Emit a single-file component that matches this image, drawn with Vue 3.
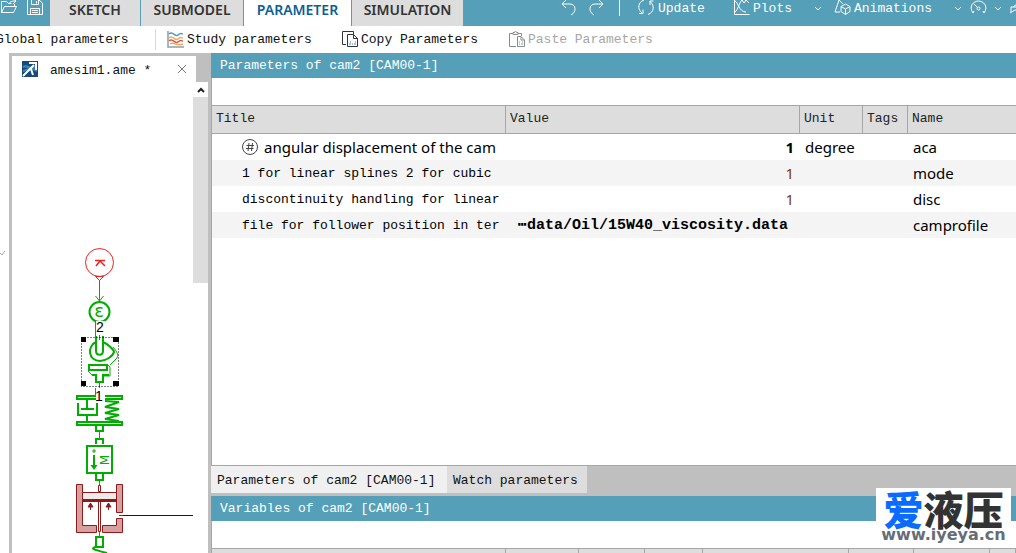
<script setup>
import { ref } from 'vue'

const modes = ['SKETCH', 'SUBMODEL', 'PARAMETER', 'SIMULATION']
const activeMode = ref('PARAMETER')

const rows = [
  { title: 'angular displacement of the cam', value: '1', unit: 'degree', name: 'aca', kind: 'state' },
  { title: '1 for linear splines 2 for cubic', value: '1', unit: '', name: 'mode', kind: 'int' },
  { title: 'discontinuity handling for linear', value: '1', unit: '', name: 'disc', kind: 'int' },
  { title: 'file for follower position in ter', value: '⋯data/Oil/15W40_viscosity.data', unit: '', name: 'camprofile', kind: 'file' },
]
</script>

<template>
  <div class="app">
    <header class="topbar">
      <div class="quick">
        <button class="ghost" aria-label="Open">
          <svg width="18" height="16" viewBox="0 0 18 16"><path d="M1.500 12.500V1.500h5l2 2h3M1.500 12.500L4.500 6.500h12l-3 6zM14.500 6V4M9 4c1-3 4-3 7-3M13 -1l3 2-3 3" /></svg>
        </button>
        <button class="ghost" aria-label="Save">
          <svg width="16" height="16" viewBox="0 0 16 16"><path d="M.5 0v14.500h15V3L12 0M4.500 0v4.500h7V0M3.500 14.500v-6h9v6M5 10.500h6M5 12.500h6M9.500 1v2.500" /></svg>
        </button>
      </div>
      <nav class="modes">
        <button
          v-for="m in modes"
          :key="m"
          :class="['mode', m.toLowerCase(), { active: m === activeMode }]"
          @click="activeMode = m"
        >{{ m }}</button>
      </nav>
      <div class="actions">
        <button class="ghost" aria-label="Undo">
          <svg width="16" height="16" viewBox="0 0 16 16"><path d="M5 0L1 4l4 4M1 4h8c6 0 7 8 1 11" /></svg>
        </button>
        <button class="ghost redo" aria-label="Redo">
          <svg width="16" height="16" viewBox="0 0 16 16"><path d="M11 0l4 4-4 4M15 4H7C1 4 0 12 6 15" /></svg>
        </button>
        <span class="rule"></span>
        <button class="ghost update">
          <svg width="17" height="16" viewBox="0 0 17 16"><path d="M6 0C0 2-1 9 4 13M1 13.500h4v-4M10 14.500c6-2 7-9 2-13M15.500 1H12v4" /></svg>
          <span>Update</span>
        </button>
        <button class="ghost plots">
          <svg width="17" height="16" viewBox="0 0 17 16"><path d="M1.500 0v14.500h15M2 12C5 10 6 3 9 0l2 3 2-3 3 3M2 1c3 1 4 11 11 11" /></svg>
          <span>Plots</span>
        </button>
        <button class="ghost chev plots-menu" aria-label="Plot options">
          <svg width="8" height="6" viewBox="0 0 8 6"><path d="M1 1l3 3 3-3" /></svg>
        </button>
        <button class="ghost animations">
          <svg width="17" height="16" viewBox="0 0 17 16"><path d="M6 12H1L5 0l4 4M11.500 4l4.500 2.500v5l-4.500 3-4.500-3v-5zM7 6.500L11.500 9 16 6.500M11.500 9v5.500" /></svg>
          <span>Animations</span>
        </button>
        <button class="ghost chev anim-menu" aria-label="Animation options">
          <svg width="8" height="6" viewBox="0 0 8 6"><path d="M1 1l3 3 3-3" /></svg>
        </button>
        <button class="ghost gauge" aria-label="Performance">
          <svg width="17" height="16" viewBox="0 0 17 16"><path d="M3 13C-2 6 4 1 8.500 1S19 6 14 13M3 13l1-2M14 13l-1-2M4 4l4 4" /><circle cx="8.500" cy="8.500" r="1.500" /></svg>
        </button>
        <button class="ghost chev gauge-menu" aria-label="Performance options">
          <svg width="8" height="6" viewBox="0 0 8 6"><path d="M1 1l3 3 3-3" /></svg>
        </button>
        <button class="ghost tools" aria-label="Tools">
          <svg width="12" height="16" viewBox="0 0 12 16"><path d="M2 12V7h8V3M4 7l4-3M1 13l5-3h6" /></svg>
        </button>
      </div>
    </header>

    <div class="toolbar">
      <button class="tool global">Global parameters</button>
      <span class="divider"></span>
      <button class="tool study">
        <svg width="18" height="17" viewBox="0 0 18 17" fill="none" stroke-width="1.500">
          <path d="M1 0v16h16" stroke="#8aa0a8" />
          <path d="M2 3c4-4 6 4 9 1s3-1 5-1" stroke="#4a9dbb" />
          <path d="M2 7c4-4 6 4 9 1s3-1 5-1" stroke="#f0a860" />
          <path d="M2 10c4-4 6 4 9 1s3-1 5-1" stroke="#e8503a" />
          <path d="M3 13c4-3 6 3 13 0" stroke="#f0a860" />
        </svg>
        <span>Study parameters</span>
      </button>
      <button class="tool copy">
        <svg width="17" height="17" viewBox="0 0 17 17" fill="none" stroke="#333">
          <path d="M4 13.500H.5V.5h11V3M5.500 15.500v-12h6l4 4v8zM11.500 3.500v4h4" />
          <path d="M7 13h2M10 13h1M12 13h2M8 11h1M13 11h1" stroke="#4a8ea6" />
        </svg>
        <span>Copy Parameters</span>
      </button>
      <button class="tool paste" disabled>
        <svg width="17" height="17" viewBox="0 0 17 17" fill="none" stroke="#8b8b8b">
          <path d="M7 15.500H.5v-13H4M9 2.500h3.500V5M4 3.500v-2h1.500c0-1.500 2-1.500 2 0H9v2zM8.500 15.500v-10H12l3.500 3.500v6.500zM12 5.500V9h3.500" />
          <path d="M10 13h1M12 13h2M10 11h1M13 11h1" stroke="#7aa08c" />
        </svg>
        <span>Paste Parameters</span>
      </button>
    </div>

    <main class="work">
      <aside class="gutter">
        <svg width="6" height="6" viewBox="0 0 6 6"><path d="M0 3l2 2 3-4" /></svg>
      </aside>

      <section class="sketch">
        <div class="doc-bar">
          <div class="doc-tab">
            <svg width="16" height="16" viewBox="0 0 16 16">
              <rect width="16" height="16" fill="#174a7c" />
              <path d="M1 6c4-2 7 1 14 4M1 10c4 0 8-5 14-4" fill="none" stroke="#3c86b8" stroke-width="2" />
              <path d="M1 15L12 4M7 2h7v7" fill="none" stroke="#fff" stroke-width="2" />
              <path d="M9 8l2 6" stroke="#fff" stroke-width="2" />
            </svg>
            <span class="doc-name">amesim1.ame *</span>
            <button class="close" aria-label="Close">
              <svg width="10" height="10" viewBox="0 0 10 10"><path d="M1 1l8 8M9 1L1 9" /></svg>
            </button>
          </div>
        </div>
        <div class="canvas-row">
          <svg class="canvas" width="181" height="471" viewBox="12 82 181 471" fill="none">
            <g stroke="#f02020">
              <circle cx="99.500" cy="262.500" r="14" />
              <path d="M95.500 276.500h8l-4 4zM99.500 280v10" />
            </g>
            <path d="M95 260.500h10M100 261l-4 5M100 261l5 5" stroke="#f02020" stroke-width="1.500" />
            <g stroke="#00ad00">
              <path d="M99.500 290v11M95.500 296l4 5 4-5" />
              <circle cx="99.500" cy="312" r="10" stroke-width="2" />
              <path d="M95.500 321v18" />
              <path d="M113 347c5 6 6 9 3 12l-6 6M108 365l2 2v9h-6M88 371l4 4h4" />
            </g>
            <text x="99" y="317" class="sym eps">ε</text>
            <path d="M96 321h9v13h-9z" fill="#fff" />
            <g stroke="#00ad00" stroke-width="2">
              <path d="M96 342c-9 4-8 19 4 19 6 0 13-5 14-9 0-2-6-8-11-10" />
              <path d="M96 336v15c0 5 7 5 7 0v-15" fill="#fff" />
              <path d="M89 365h18v5H89z" />
              <path d="M92 375h4v7h7v-7h6" />
              <path d="M99.500 383v5M95.500 388v8M99.500 335v5" stroke-width="1" />
            </g>
            <rect x="81.500" y="337.500" width="37" height="49" stroke="#000" stroke-dasharray="1 2" />
            <g fill="#000">
              <path d="M81 337h5v5h-5zM113 337h6v5h-6zM81 381h5v5h-5zM113 381h6v5h-6z" />
            </g>
            <g stroke="#00ad00" stroke-width="2">
              <path d="M96 396H77v3h19M105 396h17v3h-17" />
              <path d="M77 422h45v3H77z" />
              <path d="M87 400v9M81 409h13M78 403v12h19v-12M87 415v7" />
              <path d="M105 401l14 1-14 5 14 2-14 4 14 2-14 4 14 2" />
              <path d="M96 426v5h7v-5M96 444v-5h7v5" />
              <path d="M99.500 432v6M99.500 481v6" stroke-width="1" />
              <path d="M87 446h25v27H87zM96 474v6h7v-6" />
              <path d="M94 455v11" />
              <path d="M94 449v4M92 451h4" stroke-width="1" />
            </g>
            <path d="M90.500 465h7l-3.500 5z" fill="#00ad00" />
            <text class="sym mass" transform="translate(109 460) rotate(-90)">M</text>
            <text x="100" y="332" class="port">2</text>
            <path d="M96 389h7v13h-7z" fill="#fff" />
            <text x="99" y="401" class="port">1</text>
            <g stroke="#8f1a1a">
              <path d="M76.500 484.500h6v41h14v7h-20zM116.500 484.500h6v28h-6zM116.500 518.500h6v14h-20v-7h14z" fill="#d6a0a0" />
              <rect x="82.500" y="492.500" width="34" height="7" fill="#efebeb" />
              <path d="M82 500.500h35" stroke-width="3" />
              <path d="M98.500 485.500h2v6h-2zM98.500 502v29.500h2V502" fill="#fff" />
              <path d="M90.500 505v5M108.500 505v5M119 515.500h4" />
            </g>
            <path d="M88 507l2.500-4 2.500 4zM106 507l2.500-4 2.500 4z" fill="#8f1a1a" stroke="#8f1a1a" />
            <path d="M123 515.500h70" stroke="#0000d8" />
            <g stroke="#00ad00" stroke-width="2">
              <path d="M99.500 532v4" stroke-width="1" />
              <path d="M96 537h7v10h-7zM95 547c-5 2 0 3 12 6" />
            </g>
          </svg>
          <div class="scroll">
            <button class="scroll-up" aria-label="Scroll up">
              <svg width="8" height="6" viewBox="0 0 8 6"><path d="M1 5l3-3 3 3" /></svg>
            </button>
            <div class="thumb"></div>
          </div>
        </div>
      </section>

      <section class="panels">
        <h2 class="panel-title">Parameters of cam2 [CAM00-1]</h2>
        <div class="table-area">
          <table>
            <colgroup>
              <col class="c-title" /><col class="c-value" /><col class="c-unit" /><col class="c-tags" /><col />
            </colgroup>
            <thead>
              <tr><th>Title</th><th>Value</th><th>Unit</th><th>Tags</th><th>Name</th></tr>
            </thead>
            <tbody>
              <tr v-for="r in rows" :key="r.name" :class="r.kind">
                <td class="title">
                  <svg v-if="r.kind === 'state'" width="16" height="16" viewBox="0 0 16 16">
                    <circle cx="8" cy="8" r="7.500" />
                    <path d="M7 4L6 12M10.500 4l-1 8M4.500 6.500h7.500M4 9.500h7.500" />
                  </svg>
                  <span>{{ r.title }}</span>
                </td>
                <td class="value">{{ r.value }}</td>
                <td>{{ r.unit }}</td>
                <td></td>
                <td>{{ r.name }}</td>
              </tr>
            </tbody>
          </table>
        </div>
        <div class="panel-tabs">
          <button class="ptab active">Parameters of cam2 [CAM00-1]</button>
          <button class="ptab">Watch parameters</button>
        </div>
        <h2 class="panel-title">Variables of cam2 [CAM00-1]</h2>
        <div class="variables">
          <span></span><span></span><span></span><span></span><span></span><span></span><span></span><span></span>
        </div>
      </section>
    </main>

    <div class="watermark">
      <div class="brand"><span>爱</span>液压</div>
      <div class="site">www.iyeya.cn</div>
    </div>
  </div>
</template>

<style>
html,
body {
  margin: 0;
  overflow: hidden;
}
</style>

<style scoped>
.app {
  position: relative;
  display: flex;
  flex-direction: column;
  height: 100vh;
  overflow: hidden;
  background: #fff;
  color: #111;
  font: 13px/16px "Liberation Mono", monospace;
}
* {
  box-sizing: border-box;
}
svg {
  display: block;
  flex: none;
}
button {
  margin: 0;
  padding: 0;
  border: 0;
  background: none;
  color: inherit;
  font: inherit;
  white-space: nowrap;
  flex: none;
}
.topbar {
  display: flex;
  flex: none;
  height: 26px;
  background: #559fb9;
  color: #fff;
}
.ghost {
  display: flex;
  gap: 3px;
}
.ghost svg {
  fill: none;
  stroke: #fff;
}
.ghost span {
  padding-top: 1px;
}
.quick {
  display: flex;
  flex: none;
  gap: 9px;
  width: 50px;
}
.modes {
  display: flex;
  flex: none;
  gap: 1px;
}
.mode {
  height: 26px;
  padding-bottom: 7px;
  background: #ddd;
  color: #333;
  font: 600 14px/19px "Noto Sans", sans-serif;
}
.mode.active {
  background: #fff;
  color: #0c5f96;
}
.sketch.mode {
  width: 90px;
}
.submodel {
  width: 102px;
}
.parameter {
  width: 107px;
}
.simulation {
  width: 111px;
}
.actions {
  display: flex;
  flex: 1;
  min-width: 0;
  overflow: hidden;
  padding-left: 98px;
}
.redo {
  margin-left: 11px;
}
.rule {
  flex: none;
  width: 1px;
  height: 16px;
  margin: 0 18px 0 15px;
  background: #fff;
}
.update {
  width: 95px;
}
.plots {
  width: 81px;
}
.chev {
  padding-top: 6px;
}
.animations {
  width: 120px;
  margin-left: 12px;
}
.gauge {
  margin-left: 8px;
}
.gauge-menu {
  margin-left: 7px;
}
.tools {
  margin-left: 7px;
}
.toolbar {
  display: flex;
  flex: none;
  align-items: center;
  height: 27px;
  overflow: hidden;
}
.tool {
  display: flex;
  align-items: center;
  gap: 2px;
}
.tool span {
  padding-top: 1px;
}
.global {
  width: 159px;
  margin-left: -4px;
}
.divider {
  width: 1px;
  height: 21px;
  margin-right: 11px;
  background: #d8d8d8;
}
.study {
  width: 175px;
}
.copy {
  width: 167px;
}
.paste {
  color: #a6a6a6;
}
.work {
  display: flex;
  flex: 1;
  min-height: 0;
}
.gutter {
  flex: none;
  width: 9px;
  padding-top: 197px;
}
.gutter svg {
  fill: none;
  stroke: #aaa;
}
section.sketch {
  display: flex;
  flex: none;
  flex-direction: column;
  width: 202px;
  border: solid #bfbfbf;
  border-width: 3px 3px 0;
}
.doc-bar {
  flex: none;
  height: 26px;
  padding-right: 12px;
  background: #bfbfbf;
}
.doc-tab {
  display: flex;
  align-items: center;
  height: 26px;
  padding: 0 9px 0 10px;
  background: #fff;
}
.doc-name {
  flex: 1;
  padding: 4px 0 0 12px;
}
.close svg {
  fill: none;
  stroke: #777;
}
.canvas-row {
  display: flex;
  flex: 1;
  min-height: 0;
  overflow: hidden;
}
.scroll {
  flex: 1;
}
.scroll-up {
  display: flex;
  align-items: center;
  justify-content: center;
  width: 100%;
  height: 15px;
}
.scroll-up svg {
  fill: none;
  stroke: #222;
  stroke-width: 2;
}
.thumb {
  height: 186px;
  background: #ddd;
}
.sym {
  fill: #00ad00;
  text-anchor: middle;
}
.eps {
  font: 18px "DejaVu Sans", sans-serif;
}
.mass {
  font: 12px "DejaVu Sans", sans-serif;
}
.port {
  fill: #000;
  font: 14px "Liberation Sans", sans-serif;
  text-anchor: middle;
}
.panels {
  display: flex;
  flex: 1;
  flex-direction: column;
  min-width: 0;
}
.panel-title {
  flex: none;
  margin: 0;
  padding: 5px 9px 4px;
  background: #559fb9;
  color: #fff;
  font: inherit;
}
.table-area {
  flex: 1;
  min-height: 0;
  padding-top: 27px;
  border-bottom: 1px solid #a6a6a6;
  border-left: 1px solid #a6a6a6;
}
table {
  width: 100%;
  table-layout: fixed;
  border-collapse: separate;
  border-spacing: 0;
}
.c-title,
.c-value {
  width: 294px;
}
.c-unit {
  width: 63px;
}
.c-tags {
  width: 45px;
}
th {
  height: 29px;
  padding: 0 0 2px 4px;
  border: solid #a6a6a6;
  border-width: 1px 1px 1px 0;
  background: #ddd;
  color: #222;
  font-weight: 400;
  text-align: left;
}
th:last-child {
  border-right: 0;
}
td {
  height: 26px;
  padding: 0 0 0 5px;
  overflow: hidden;
  color: #000;
  font: 15px/20px "Noto Sans", sans-serif;
  white-space: nowrap;
}
tbody tr:nth-child(even) {
  background: #f4f4f4;
}
td.title {
  padding: 2px 0 0 30px;
  font: 13px/16px "Liberation Mono", monospace;
}
.state td.title {
  display: flex;
  align-items: center;
  gap: 6px;
  padding-top: 0;
  font: 15px/20px "Noto Sans", sans-serif;
}
.title svg {
  fill: none;
  stroke: #444;
}
td.value {
  padding-right: 6px;
  text-align: right;
}
.state .value {
  font-weight: 700;
}
.int .value {
  color: #7a3c08;
}
.file td.value {
  padding: 2px 12px 0 0;
  font: 700 15px/16px "Liberation Mono", monospace;
}
.panel-tabs {
  display: flex;
  flex: none;
  height: 30px;
  background: #bfbfbf;
}
.ptab {
  width: 140px;
  height: 27px;
  padding: 2px 0 0 6px;
  background: #ddd;
  text-align: left;
}
.ptab.active {
  width: 236px;
  background: #f0f0f0;
}
.variables {
  display: grid;
  flex: none;
  grid-template-columns: 294px 73px 66px 58px 146px 65px 76px 1fr;
  height: 32px;
  padding-top: 27px;
  border-left: 1px solid #a6a6a6;
}
.variables span {
  border: solid #a6a6a6;
  border-width: 1px 1px 0 0;
  background: #ddd;
}
.watermark {
  position: absolute;
  right: 5px;
  bottom: 11px;
  width: 135px;
  height: 54px;
  background: #fff;
  text-align: center;
}
.brand {
  height: 40px;
  color: #333;
  font: 900 40px/40px "Noto Sans CJK SC", sans-serif;
  white-space: nowrap;
}
.brand span {
  color: #0a6cff;
}
.site {
  color: #666c78;
  font: 700 16px/14px "DejaVu Sans", sans-serif;
  white-space: nowrap;
}
</style>
